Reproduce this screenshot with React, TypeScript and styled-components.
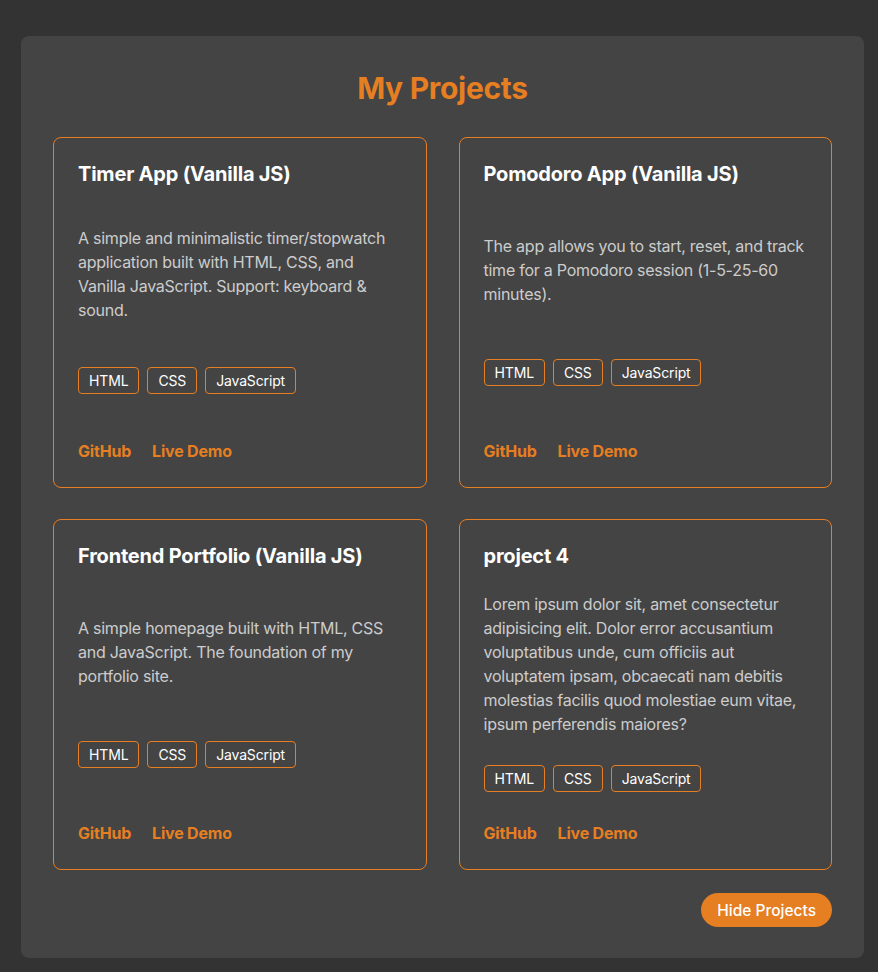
import React, { useState } from 'react';
import styled, { createGlobalStyle } from 'styled-components';

const GlobalStyle = createGlobalStyle`
  * {
    box-sizing: border-box;
  }

  body {
    margin: 0;
    background: #333333;
    font-family: Inter, "Noto Sans", "Liberation Sans", sans-serif;
    -webkit-font-smoothing: antialiased;
  }
`;

const Page = styled.div`
  padding: 36px 14px 14px 21px;
  min-height: 100vh;
`;

const Panel = styled.section`
  background: #444444;
  border-radius: 8px;
  padding: 34px 32px 31px;
  display: flex;
  flex-direction: column;
`;

const Heading = styled.h2`
  margin: 0 0 31px;
  text-align: center;
  color: #e67e22;
  font-size: 30px;
  font-weight: 700;
  line-height: 36px;
  letter-spacing: -0.3px;
`;

const Grid = styled.div`
  display: grid;
  grid-template-columns: 1fr 1fr;
  grid-auto-rows: 1fr;
  row-gap: 31px;
  column-gap: 32px;
`;

const Card = styled.article`
  border: 1px solid #e67e22;
  border-radius: 8px;
  padding: 24px;
  display: flex;
  flex-direction: column;
  justify-content: space-between;
`;

const CardTitle = styled.h3`
  margin: 0 0 24px;
  color: #ffffff;
  font-size: 20px;
  font-weight: 700;
  line-height: 24px;
  letter-spacing: -0.2px;
`;

const Description = styled.p`
  margin: 0 0 29px;
  color: #cccccc;
  font-size: 16px;
  line-height: 24px;
  letter-spacing: -0.25px;
`;

const TagList = styled.ul`
  list-style: none;
  margin: 0 0 29px;
  padding: 0;
  display: flex;
  flex-wrap: wrap;
  gap: 8px;
`;

const Tag = styled.li`
  border: 1px solid #e67e22;
  border-radius: 4px;
  padding: 4px 10px;
  color: #ffffff;
  font-size: 14px;
  line-height: 17px;
  letter-spacing: -0.15px;
`;

const Links = styled.div`
  display: flex;
  gap: 21px;
`;

const CardLink = styled.a`
  color: #e67e22;
  font-size: 16px;
  font-weight: 700;
  line-height: 24px;
  text-decoration: none;
  letter-spacing: -0.2px;

  &:hover {
    text-decoration: underline;
  }
`;

const Footer = styled.div`
  display: flex;
  justify-content: flex-end;
  margin-top: 23px;
`;

const ToggleButton = styled.button`
  background: #e67e22;
  color: #ffffff;
  border: none;
  border-radius: 999px;
  padding: 0 16px;
  height: 34px;
  font-family: inherit;
  font-size: 15.5px;
  font-weight: 500;
  cursor: pointer;

  &:hover {
    background: #d35400;
  }
`;

type Project = {
  title: string;
  description: string;
  tags: string[];
};

const projects: Project[] = [
  {
    title: 'Timer App (Vanilla JS)',
    description:
      'A simple and minimalistic timer/stopwatch application built with HTML, CSS, and Vanilla JavaScript. Support: keyboard & sound.',
    tags: ['HTML', 'CSS', 'JavaScript'],
  },
  {
    title: 'Pomodoro App (Vanilla JS)',
    description:
      'The app allows you to start, reset, and track time for a Pomodoro session (1-5-25-60 minutes).',
    tags: ['HTML', 'CSS', 'JavaScript'],
  },
  {
    title: 'Frontend Portfolio (Vanilla JS)',
    description:
      'A simple homepage built with HTML, CSS and JavaScript. The foundation of my portfolio site.',
    tags: ['HTML', 'CSS', 'JavaScript'],
  },
  {
    title: 'project 4',
    description:
      'Lorem ipsum dolor sit, amet consectetur adipisicing elit. Dolor error accusantium voluptatibus unde, cum officiis aut voluptatem ipsam, obcaecati nam debitis molestias facilis quod molestiae eum vitae, ipsum perferendis maiores?',
    tags: ['HTML', 'CSS', 'JavaScript'],
  },
];

const App: React.FC = () => {
  const [visible, setVisible] = useState(true);

  return (
    <>
      <GlobalStyle />
      <Page>
        <Panel>
          <Heading>My Projects</Heading>
          {visible && (
            <Grid>
              {projects.map(project => (
                <Card key={project.title}>
                  <CardTitle>{project.title}</CardTitle>
                  <Description>{project.description}</Description>
                  <TagList>
                    {project.tags.map(tag => (
                      <Tag key={tag}>{tag}</Tag>
                    ))}
                  </TagList>
                  <Links>
                    <CardLink href="#">GitHub</CardLink>
                    <CardLink href="#">Live Demo</CardLink>
                  </Links>
                </Card>
              ))}
            </Grid>
          )}
          <Footer>
            <ToggleButton onClick={() => setVisible(!visible)}>
              {visible ? 'Hide Projects' : 'Show Projects'}
            </ToggleButton>
          </Footer>
        </Panel>
      </Page>
    </>
  );
};

export default App;
